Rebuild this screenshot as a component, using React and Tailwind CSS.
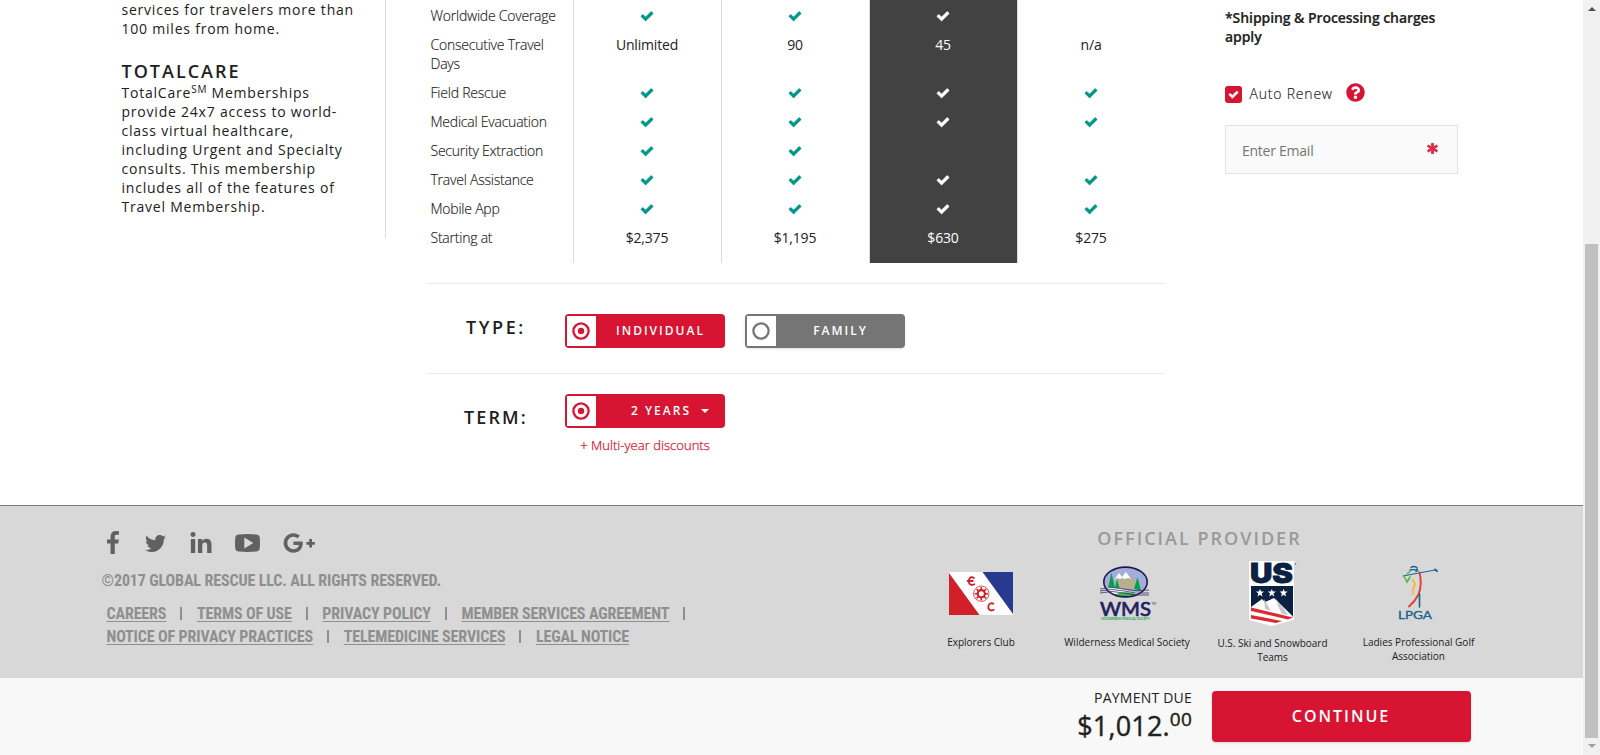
import { FaAsterisk, FaGooglePlusG, FaLinkedinIn, FaQuestionCircle, FaTwitter } from "react-icons/fa";

function Check({ className }) {
  return (
    <svg viewBox="0 0 1792 1792" className={className} fill="currentColor" stroke="currentColor" strokeWidth="50">
      <path d="M1671 566q0 40-28 68l-724 724-136 136q-28 28-68 28t-68-28l-136-136-362-362q-28-28-28-68t28-68l136-136q28-28 68-28t68 28l294 295 656-657q28-28 68-28t68 28l136 136q28 28 28 68z" />
    </svg>
  );
}

const labels = ["Worldwide Coverage", "Consecutive Travel Days", "Field Rescue", "Medical Evacuation", "Security Extraction", "Travel Assistance", "Mobile App", "Starting at"];

const plans = [
  { cells: [true, "Unlimited", true, true, true, true, true, "$2,375"], box: "border-l border-[#dcdcdc]", check: "text-[#009688]" },
  { cells: [true, "90", true, true, true, true, true, "$1,195"], box: "border-l border-[#dcdcdc]", check: "text-[#009688]" },
  { cells: [true, "45", true, true, false, true, true, "$630"], box: "border-l border-[#dcdcdc] bg-[#424242] text-white", check: "text-white" },
  { cells: [false, "n/a", true, true, false, true, true, "$275"], box: "border-l border-[#dcdcdc]", check: "text-[#009688]" },
];

function Plan({ plan }) {
  return (
    <div className={"flex h-[263px] w-[148px] flex-col pt-px tracking-[-0.18px] " + plan.box}>
      {plan.cells.map((c, i) => (
        <div key={i} className={"flex justify-center pt-[5px] pr-px " + (i === 1 ? "h-12" : "h-[29px]")}>
          {c === true ? <Check className={"mt-[3px] size-[14px] " + plan.check} /> : c}
        </div>
      ))}
    </div>
  );
}

function Radio({ on, className }) {
  return (
    <span className="flex h-[30px] w-[29px] shrink-0 items-center justify-center bg-white pr-px">
      <svg viewBox="0 0 18 18" className={"size-[18px] " + className}>
        <circle cx="9" cy="9" r="7.600" fill="none" stroke="currentColor" strokeWidth="2.300" />
        {on && <circle cx="9" cy="9" r="3.200" fill="currentColor" />}
      </svg>
    </span>
  );
}

function ExplorersFlag() {
  return (
    <svg viewBox="0 0 64 43" className="mt-[11px] h-[43px] w-16">
      <path fill="#fff" d="M0 0h64v43H0z" />
      <path fill="#d2202a" d="M0 1v42h30.500z" />
      <path fill="#283990" d="M33.500 0H64v42z" />
      <g fill="none" stroke="#d2202a">
        <path strokeWidth="1.800" d="M25.500 6.500Q21.500 3.500 20 7.500q-1 5 3 5.500l3-1M18 9h6.500" />
        <path strokeWidth="1.800" d="M45 32q-4-2-5.500 1.500-1 4.500 3 5l3-1" />
        <circle cx="32.300" cy="21.700" r="7.700" strokeWidth=".8" />
        <circle cx="32.300" cy="21.700" r="3.600" strokeWidth="2.200" />
        <path strokeWidth="1.600" d="M32.300 15v3M32.300 25.400v3M25.600 21.700h3M36 21.700h3M27.600 17l2.100 2.100M34.900 24.300l2.100 2.100M27.600 26.400l2.100-2.100M34.900 19.100L37 17" />
      </g>
    </svg>
  );
}

function WmsLogo() {
  return (
    <svg viewBox="0 0 56 54" className="mt-[5px] h-[54px] w-14 overflow-visible">
      <defs>
        <clipPath id="wms"><ellipse cx="26.500" cy="16" rx="21.500" ry="15" /></clipPath>
      </defs>
      <g clipPath="url(#wms)">
        <path fill="#a4add9" d="M0 0h56v32H0z" />
        <path fill="#b8ae92" d="M14 25l3-10 5-4 6-2 7 3 5 11z" />
        <path fill="#fff" d="M15 14l5-7 3 4 4-5 5 7-3-1-3 1-3-1-2 1-3-1z" />
        <path fill="#00a14b" d="M9 22l3.500-15L16 22zm7 0l2-9 2.500 9zm19 1l3.500-12L42 25z" />
        <path fill="#fff" d="M0 22q14-2 26 2t30 1v4H0z" />
        <path fill="#3cb44a" d="M14 29q12-5 25-.500L34 32H18z" />
      </g>
      <ellipse cx="26.500" cy="16" rx="21.700" ry="14.900" fill="none" stroke="#1d1852" strokeWidth="1.600" />
      <g fill="none" stroke="#38326a" strokeWidth=".8">
        <path d="M1 23q12-3 24 0t25 1M1 25q12-3 24 0t25 2M1 27q12-3 24 0t25 2" />
      </g>
      <text x="1" y="50" textLength="51" lengthAdjust="spacingAndGlyphs" fill="#241f62" stroke="#241f62" strokeWidth=".7" className="font-['Lato',sans-serif] text-[19px]">WMS</text>
      <text x="52.500" y="39" fill="#241f62" className="font-['Lato',sans-serif] text-[3px]">TM</text>
      <text x="2" y="54" textLength="49" lengthAdjust="spacingAndGlyphs" fill="#22a64f" className="font-['Lato',sans-serif] text-[3px] font-bold">WILDERNESS MEDICAL SOCIETY</text>
    </svg>
  );
}

function UsSkiLogo() {
  return (
    <svg viewBox="0 0 48 66" className="ml-[1px] h-[66px] w-12 overflow-visible">
      <path fill="#fff" d="M0 0h45v59l-22.500 6L0 59z" />
      <path fill="#0b2142" d="M2 25h42v31L2 47z" />
      <text x="1" y="22.400" textLength="43" lengthAdjust="spacingAndGlyphs" fill="#0b2142" stroke="#0b2142" strokeWidth=".8" className="font-['Inter',sans-serif] text-[27px] font-black">US</text>
      <path fill="#fff" d="M11 28l1.100 2.600h2.900l-2.300 1.900.8 2.900-2.500-1.700-2.500 1.700.8-2.900L7 30.600h2.900zM22.800 28l1.100 2.600h2.900l-2.300 1.900.8 2.900-2.500-1.700-2.500 1.700.8-2.900-2.300-1.900h2.900zM34.600 28l1.100 2.600h2.900l-2.300 1.900.8 2.900-2.500-1.700-2.500 1.700.8-2.900-2.300-1.900h2.900z" />
      <path fill="#fff" d="M2 46l11-8 3 3 9-4 18.500 18v3l-21 5.500L2 58z" />
      <path fill="#c5c7c9" d="M15 38l7 12-6-2zM27 38l8 10 4 6-6-1-4-8z" />
      <path fill="#dc2a32" d="M2 46.500l42 10-5 2L2 50zM2 54l31 6-6 2L2 57.500z" />
      <circle cx="46.500" cy="3" r=".8" fill="#5d6778" />
    </svg>
  );
}

function LpgaLogo() {
  return (
    <svg viewBox="0 0 42 56" className="mt-[4px] ml-px h-[56px] w-[42px] overflow-visible">
      <g fill="none" strokeLinecap="round">
        <path d="M13 2.500q2-2 6 0 1 2-1 4M12 5q4-1 8 1" stroke="#17628f" strokeWidth="1.300" />
        <path d="M5 11L37 5l2 1.500" stroke="#17628f" strokeWidth="1" />
        <path d="M37 4.500l2 1.500" stroke="#17628f" strokeWidth="1.800" />
        <path d="M6 11l3 6 3-5M9 9l3-2.500" stroke="#55b848" strokeWidth="1.600" />
        <path d="M14.500 15q4 3 1.500 6.500-2 4-1 7.500" stroke="#f3bd31" strokeWidth="1.900" />
        <path d="M21.500 7.500q3 12-1 22-3.500 7-9.500 12" stroke="#e43d30" strokeWidth="1.900" />
        <path d="M21.500 29v13" stroke="#17628f" strokeWidth="1.600" />
      </g>
      <text x="0" y="54" textLength="34" lengthAdjust="spacingAndGlyphs" fill="#17628f" stroke="#17628f" strokeWidth=".3" className="font-['Lato',sans-serif] text-[10.500px]">LPGA</text>
    </svg>
  );
}

function Provider({ width, label, children, textClass }) {
  return (
    <div className={"flex shrink-0 flex-col items-center " + width}>
      <div className="flex h-[73px] items-start">{children}</div>
      <p className={"text-center text-[10px] leading-[14px] text-[#212121] " + textClass}>{label}</p>
    </div>
  );
}

function FooterLinks({ items, trailing }) {
  return (
    <div className="flex h-[23px] items-center">
      {items.map((t, i) => (
        <div key={t} className="flex items-center">
          <a href="#" className="leading-[19px] underline decoration-1 underline-offset-2">{t}</a>
          {(i < items.length - 1 || trailing) && <span className="mr-[14.600px] ml-[14px] h-[13px] w-[2px] bg-[#8f8f8f]" />}
        </div>
      ))}
    </div>
  );
}

export default function App() {
  return (
    <div className="flex h-[755px] w-[1600px] overflow-hidden bg-white font-['Open_Sans',sans-serif] text-[14px] leading-[19px] text-[#212121]">
      <div className="flex w-[1583px] flex-col">
        <main className="flex h-[505px] shrink-0">
          <aside className="ml-[121px] h-[238px] w-[265px] shrink-0 border-r border-[#dcdcdc] pl-[0.500px] tracking-[0.780px]">
            <p className="h-[39px] whitespace-nowrap">services for travelers more than<br />100 miles from home.</p>
            <h2 className="mt-[22px] h-[22px] text-[18px] leading-[20px] font-semibold tracking-[2px]">TOTALCARE</h2>
            <p className="whitespace-nowrap">
              TotalCare<sup className="text-[10px] leading-none">SM</sup> Memberships<br />provide 24x7 access to world-<br />class virtual healthcare,<br />including Urgent and Specialty<br />consults. This membership<br />includes all of the features of<br />Travel Membership.
            </p>
          </aside>

          <section className="ml-[40px] w-[739px] shrink-0">
            <div className="flex h-[283px]">
              <div className="w-[147px] pt-px pl-[4.500px] font-light tracking-[-0.230px] [-webkit-text-stroke:0.15px_#212121]">
                {labels.map((l, i) => (
                  <div key={l} className={"w-[130px] pt-[5px] " + (i === 1 ? "h-12" : "h-[29px]")}>{l}</div>
                ))}
              </div>
              {plans.map((p, i) => <Plan key={i} plan={p} />)}
            </div>
            <div className="flex h-[90px] border-t border-[#ebebeb] pt-[30px]">
              <h3 className="w-[139px] pt-[1px] pl-[40px] text-[18px] leading-[25px] font-semibold tracking-[2.600px]">TYPE:</h3>
              <button className="flex h-[34px] w-[160px] items-center rounded-[4px] bg-[#d81433] p-[2px] text-[12px] font-semibold tracking-[2px] text-white">
                <Radio on className="text-[#d81433]" />
                <span className="flex-1 pb-px pl-[2px]">INDIVIDUAL</span>
              </button>
              <button className="ml-5 flex h-[34px] w-[160px] items-center rounded-[4px] bg-[#757575] p-[2px] text-[12px] font-semibold tracking-[2px] text-white shadow-sm">
                <Radio className="text-[#757575]" />
                <span className="flex-1 pb-px pl-[2px]">FAMILY</span>
              </button>
            </div>
            <div className="flex border-t border-[#ebebeb] pt-[20px]">
              <h3 className="w-[139px] pt-[11px] pl-[38px] text-[18px] leading-[25px] font-semibold tracking-[2.100px]">TERM:</h3>
              <div className="w-[160px]">
                <button className="flex h-[34px] w-full items-center rounded-[4px] bg-[#d81433] p-[2px] text-[12px] font-semibold tracking-[2px] text-white">
                  <Radio on className="text-[#d81433]" />
                  <span className="ml-[35px] pb-px">2 YEARS</span>
                  <svg viewBox="0 0 8 4" className="ml-[10px] h-1 w-2"><path fill="#fff" d="M0 0h8L4 4z" /></svg>
                </button>
                <p className="mt-[8px] text-center text-[13px] font-light tracking-[0.040px] whitespace-nowrap text-[#d81433] [-webkit-text-stroke:0.25px_#d81433]">+ Multi-year discounts</p>
              </div>
            </div>
          </section>

          <section className="ml-[60px] w-[233px] shrink-0 pt-[8px]">
            <p className="h-[38px] font-semibold tracking-[-0.070px] [-webkit-text-stroke:0.2px_#212121]">*Shipping &amp; Processing charges<br />apply</p>
            <div className="mt-[37px] flex h-[20px] items-start">
              <span className="mt-[3px] flex size-[17px] items-center justify-center rounded-[3px] bg-[#d81433]"><Check className="mb-px size-[11px] text-white" /></span>
              <span className="ml-[7.500px] w-[96.500px] pt-[1px] font-light tracking-[0.800px] [-webkit-text-stroke:0.15px_#212121]">Auto Renew</span>
              <FaQuestionCircle className="size-[19px] text-[#d81433]" />
            </div>
            <div className="mt-[22px] flex h-[49px] items-center justify-between border border-[#e3e3e3] bg-[#fafafa] px-4">
              <span className="pt-[2px] tracking-[-0.250px] text-[#757575]">Enter Email</span>
              <FaAsterisk stroke="currentColor" strokeWidth="45" className="mr-[3px] mb-[2px] size-[11px] text-[#dc2b48]" />
            </div>
          </section>
        </main>

        <footer className="flex h-[173px] shrink-0 border-t border-[#7c7c7c] bg-[#d8d8d8]">
          <div className="ml-[101.500px] w-[810.500px] shrink-0 font-['Roboto_Condensed','Roboto',sans-serif] text-[16px] font-bold tracking-[-0.130px] text-[#8f8f8f] [font-stretch:75%]">
            <div className="mt-[25px] flex h-6 items-center text-[#616161]">
              <svg viewBox="479 0 864 1664" fill="currentColor" className="mb-px ml-[5.500px] h-[23px] w-[12px]">
                <path d="M1343 12v264h-157q-86 0-116 36t-30 108v189h293l-39 296h-254v759h-306v-759h-255v-296h255v-218q0-186 104-288.500t277-102.500q147 0 228 12z" />
              </svg>
              <FaTwitter className="ml-[25.500px] size-[21px]" />
              <FaLinkedinIn className="mt-px ml-[23.500px] size-[24px]" />
              <svg viewBox="0 0 25 18" className="ml-[22px] h-[18px] w-[25px]">
                <path fill="currentColor" fillRule="evenodd" d="M4 .4Q12.500-.4 21 .4q3.300.2 3.700 3 .6 5.600 0 11.200-.4 2.800-3.700 3-8.500.8-17 0-3.300-.2-3.700-3-.6-5.600 0-11.200.4-2.800 3.700-3zM9.300 3.500v11l9-5.500z" />
              </svg>
              <FaGooglePlusG className="ml-[23px] h-[26px] w-[32.500px]" />
            </div>
            <p className="mt-[16px] leading-[20px]">©2017 GLOBAL RESCUE LLC. ALL RIGHTS RESERVED.</p>
            <nav className="mt-[11px] ml-[5px]">
              <FooterLinks items={["CAREERS", "TERMS OF USE", "PRIVACY POLICY", "MEMBER SERVICES AGREEMENT"]} trailing />
              <FooterLinks items={["NOTICE OF PRIVACY PRACTICES", "TELEMEDICINE SERVICES", "LEGAL NOTICE"]} />
            </nav>
          </div>
          <div className="ml-[-4px] w-[583px] pt-[20px]">
            <h4 className="text-center text-[18px] leading-[25px] font-semibold tracking-[2px] text-[#999]">OFFICIAL PROVIDER</h4>
            <div className="mt-[10px] flex">
              <Provider width="w-[146px]" label="Explorers Club" textClass="pt-[1px]"><ExplorersFlag /></Provider>
              <Provider width="w-[146px]" label="Wilderness Medical Society" textClass="whitespace-nowrap pt-[1px]"><WmsLogo /></Provider>
              <Provider width="w-[145px]" label="U.S. Ski and Snowboard Teams" textClass="w-[120px] pt-[2px]"><UsSkiLogo /></Provider>
              <Provider width="w-[147px]" label="Ladies Professional Golf Association" textClass="w-[125px] pt-[1px]"><LpgaLogo /></Provider>
            </div>
          </div>
        </footer>

        <div className="flex h-[77px] shrink-0 justify-end bg-[#f8f8f8] pr-[112px]">
          <div className="mr-[20px] pt-[10px] text-right">
            <p className="text-[14px] leading-[19px] font-medium tracking-[0.220px]">PAYMENT DUE</p>
            <p className="flex items-start justify-end text-[27px] leading-[37px] font-medium tracking-[0.200px] [-webkit-text-stroke:0.4px_#212121]">
              <span>$1,012.</span><span className="text-[19px] leading-[25px]">00</span>
            </p>
          </div>
          <button className="mt-[13px] h-[51px] w-[259px] rounded-[4px] bg-[#d81433] pr-[1px] text-[16px] font-semibold tracking-[2px] text-white shadow-sm">CONTINUE</button>
        </div>
      </div>
      <div className="flex w-[17px] flex-col items-center bg-[#f1f1f1]">
        <svg viewBox="0 0 8 4" className="mt-[7px] h-1 w-2"><path fill="#505050" d="M0 4h8L4 0z" /></svg>
        <div className="mt-[233px] h-[494px] w-[13px] bg-[#c1c1c1]" />
        <svg viewBox="0 0 8 4" className="mt-[6px] h-1 w-2"><path fill="#a0a0a0" d="M0 0h8L4 4z" /></svg>
      </div>
    </div>
  );
}
